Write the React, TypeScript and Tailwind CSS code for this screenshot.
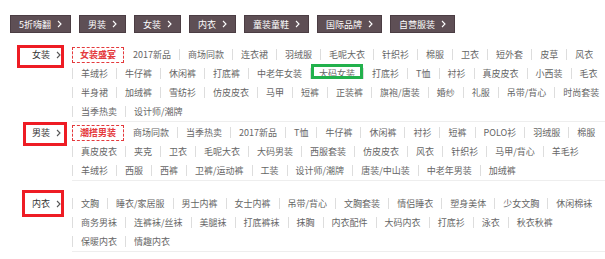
import React from "react";

const FONT = { fontFamily: '"Noto Sans CJK SC", "Noto Sans", sans-serif' };

const Chevron = ({ color = "#fff" }: { color?: string }) => (
  <svg width="5" height="8" viewBox="0 0 5 8" className="shrink-0">
    <path d="M1 1 L4 4 L1 7" fill="none" stroke={color} strokeWidth="1.1" />
  </svg>
);

const tabs = ["5折嗨翻", "男装", "女装", "内衣", "童装童鞋", "国际品牌", "自营服装"];

type Section = {
  label: string;
  hot: string;
  rows: string[][];
  cls: string;
};

const sections: Section[] = [
  {
    label: "女装",
    hot: "女装盛宴",
    cls: "pb-0",
    rows: [
      ["2017新品", "商场同款", "连衣裙", "羽绒服", "毛呢大衣", "针织衫", "棉服", "卫衣", "短外套", "皮草", "风衣"],
      ["羊绒衫", "牛仔裤", "休闲裤", "打底裤", "中老年女装", "大码女装", "打底衫", "T恤", "衬衫", "真皮皮衣", "小西装", "毛衣"],
      ["半身裙", "加绒裤", "雪纺衫", "仿皮皮衣", "马甲", "短裤", "正装裤", "旗袍/唐装", "婚纱", "礼服", "吊带/背心", "时尚套装"],
      ["当季热卖", "设计师/潮牌"],
    ],
  },
  {
    label: "男装",
    hot: "潮搭男装",
    cls: "pt-[1px] pb-[9px]",
    rows: [
      ["商场同款", "当季热卖", "2017新品", "T恤", "牛仔裤", "休闲裤", "衬衫", "短裤", "POLO衫", "羽绒服", "棉服"],
      ["真皮皮衣", "夹克", "卫衣", "毛呢大衣", "大码男装", "西服套装", "仿皮皮衣", "风衣", "针织衫", "马甲/背心", "羊毛衫"],
      ["羊绒衫", "西服", "西裤", "卫裤/运动裤", "工装", "设计师/潮牌", "唐装/中山装", "中老年男装", "加绒裤"],
    ],
  },
  {
    label: "内衣",
    hot: "",
    cls: "pt-[4px] pb-[4px]",
    rows: [
      ["文胸", "睡衣/家居服", "男士内裤", "女士内裤", "吊带/背心", "文胸套装", "情侣睡衣", "塑身美体", "少女文胸", "休闲棉袜"],
      ["商务男袜", "连裤袜/丝袜", "美腿袜", "打底裤袜", "抹胸", "内衣配件", "大码内衣", "打底衫", "泳衣", "秋衣秋裤"],
      ["保暖内衣", "情趣内衣"],
    ],
  },
];

export default function App() {
  return (
    <div className="relative w-[605px] h-[259px] bg-white overflow-hidden text-[9px]" style={FONT}>
      {/* top tabs */}
      <div className="flex gap-[8px] pl-[10px] pt-[15px]">
        {tabs.map((t) => (
          <div
            key={t}
            className="flex items-center gap-[6px] h-[18px] px-[8px] bg-[#5e4f55] border border-[#4b3d43] text-white leading-none"
          >
            <span>{t}</span>
            <Chevron />
          </div>
        ))}
      </div>

      {/* sections */}
      <div className="mt-[12px]">
        {sections.map((s) => (
          <div key={s.label} className={`flex ${s.cls}`}>
            <div className="w-[72px] shrink-0">
              <div className="flex items-center h-[19px] pl-[32px] gap-[6px] text-[#333]">
                <span>{s.label}</span>
                <Chevron color="#555" />
              </div>
            </div>
            <div className="flex-1 border-b border-[#eeeeee]">
              {s.rows.map((row, ri) => (
                <div key={ri} className="flex items-center h-[19px] whitespace-nowrap">
                  {ri === 0 && s.hot ? (
                    <span className="flex items-center h-[16px] px-[7px] border border-dashed border-[#e4393c] text-[#e4393c] font-bold">
                      {s.hot}
                    </span>
                  ) : null}
                  {row.map((t, i) => (
                    <span
                      key={t + i}
                      className={`px-[8px] leading-[11px] border-l text-[#666] ${
                        ri === 0 && i === 0 && s.hot ? "border-transparent" : "border-[#dddddd]"
                      }`}
                    >
                      {t}
                    </span>
                  ))}
                </div>
              ))}
            </div>
          </div>
        ))}
      </div>

      {/* annotation boxes */}
      <div className="absolute left-[17px] top-[45px] w-[47px] h-[23px] border-[3px] border-[#ee1c24]" />
      <div className="absolute left-[23px] top-[122px] w-[44px] h-[24px] border-[3px] border-[#ee1c24]" />
      <div className="absolute left-[22px] top-[190px] w-[42px] h-[27px] border-[3px] border-[#ee1c24]" />
      <div className="absolute left-[311px] top-[64px] w-[52px] h-[15px] border-[3px] border-[#22b14c]" />
    </div>
  );
}
